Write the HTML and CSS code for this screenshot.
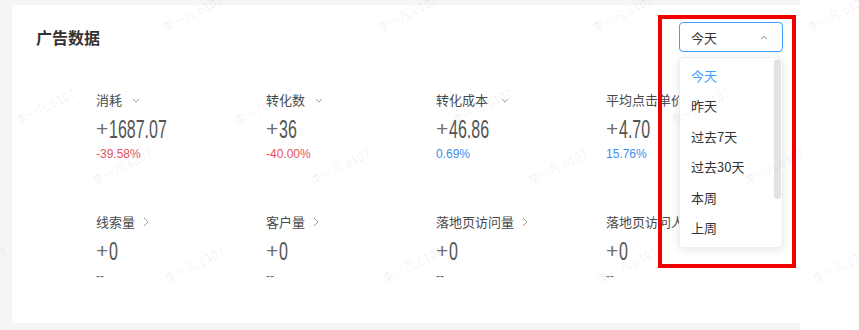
FILE: index.html
```html
<!DOCTYPE html>
<html lang="zh-CN">
<head>
<meta charset="utf-8">
<title>广告数据</title>
<link rel="stylesheet" href="styles.css">
</head>
<body>
<div class="page">
  <div class="card">
    <div class="header">
      <h2 class="title">广告数据</h2>
      <div class="select">
        <span>今天</span>
        <svg class="sel-arrow" width="8" height="5" viewBox="0 0 8 5"><polyline points="1,4.2 4,1.2 7,4.2" fill="none" stroke="#a8abb2" stroke-width="1.1"/></svg>
      </div>
    </div>
    <div class="grid">
      <div class="metric">
        <div class="label">消耗<svg class="chev-d" width="8" height="5" viewBox="0 0 8 5"><polyline points="1,1 4,4 7,1" fill="none" stroke="#a0a0a0" stroke-width="1"/></svg></div>
        <div class="value"><span class="plus">+</span><span class="num">1687.07</span></div>
        <div class="sub red">-39.58%</div>
      </div>
      <div class="metric">
        <div class="label">转化数<svg class="chev-d" width="8" height="5" viewBox="0 0 8 5"><polyline points="1,1 4,4 7,1" fill="none" stroke="#a0a0a0" stroke-width="1"/></svg></div>
        <div class="value"><span class="plus">+</span><span class="num">36</span></div>
        <div class="sub red">-40.00%</div>
      </div>
      <div class="metric">
        <div class="label">转化成本<svg class="chev-d wide" width="8" height="5" viewBox="0 0 8 5"><polyline points="1,1 4,4 7,1" fill="none" stroke="#a0a0a0" stroke-width="1"/></svg></div>
        <div class="value"><span class="plus">+</span><span class="num">46.86</span></div>
        <div class="sub blue">0.69%</div>
      </div>
      <div class="metric">
        <div class="label">平均点击单价</div>
        <div class="value"><span class="plus">+</span><span class="num">4.70</span></div>
        <div class="sub blue">15.76%</div>
      </div>
      <div class="metric">
        <div class="label">线索量<svg class="chev-r" width="6" height="10" viewBox="0 0 6 10"><polyline points="1,1 5,5 1,9" fill="none" stroke="#a0a0a0" stroke-width="1"/></svg></div>
        <div class="value"><span class="plus">+</span><span class="num">0</span></div>
        <div class="sub gray">--</div>
      </div>
      <div class="metric">
        <div class="label">客户量<svg class="chev-r" width="6" height="10" viewBox="0 0 6 10"><polyline points="1,1 5,5 1,9" fill="none" stroke="#a0a0a0" stroke-width="1"/></svg></div>
        <div class="value"><span class="plus">+</span><span class="num">0</span></div>
        <div class="sub gray">--</div>
      </div>
      <div class="metric">
        <div class="label">落地页访问量<svg class="chev-r" width="6" height="10" viewBox="0 0 6 10"><polyline points="1,1 5,5 1,9" fill="none" stroke="#a0a0a0" stroke-width="1"/></svg></div>
        <div class="value"><span class="plus">+</span><span class="num">0</span></div>
        <div class="sub gray">--</div>
      </div>
      <div class="metric">
        <div class="label">落地页访问人数</div>
        <div class="value"><span class="plus">+</span><span class="num">0</span></div>
        <div class="sub gray">--</div>
      </div>
    </div>

    <div class="menu">
      <ul class="menu-list">
        <li class="active">今天</li>
        <li>昨天</li>
        <li>过去7天</li>
        <li>过去30天</li>
        <li>本周</li>
        <li>上周</li>
      </ul>
      <div class="thumb"></div>
    </div>
    <div class="redframe"></div>
  </div>

  <div class="watermarks">
    <span class="wm" style="left:159px;top:3px">李一凡 6107</span>
    <span class="wm" style="left:374px;top:3px">李一凡 6107</span>
    <span class="wm" style="left:589px;top:3px">李一凡 6107</span>
    <span class="wm" style="left:804px;top:3px">李一凡 6107</span>
    <span class="wm" style="left:12px;top:96px">李一凡 6107</span>
    <span class="wm" style="left:231px;top:96px">李一凡 6107</span>
    <span class="wm" style="left:449px;top:96px">李一凡 6107</span>
    <span class="wm" style="left:667px;top:96px">李一凡 6107</span>
    <span class="wm" style="left:89px;top:156px">李一凡 6107</span>
    <span class="wm" style="left:307px;top:156px">李一凡 6107</span>
    <span class="wm" style="left:524px;top:156px">李一凡 6107</span>
    <span class="wm" style="left:741px;top:156px">李一凡 6107</span>
    <span class="wm" style="left:-56px;top:254px">李一凡 6107</span>
    <span class="wm" style="left:161px;top:254px">李一凡 6107</span>
    <span class="wm" style="left:379px;top:254px">李一凡 6107</span>
    <span class="wm" style="left:594px;top:254px">李一凡 6107</span>
    <span class="wm" style="left:809px;top:254px">李一凡 6107</span>
  </div>
</div>
</body>
</html>
```

FILE: styles.css
```css
* { box-sizing: border-box; }
html, body {
  margin: 0;
  padding: 0;
  background: #ffffff;
}
body {
  width: 859px;
  height: 330px;
  overflow: hidden;
  position: relative;
  font-family: "Noto Sans CJK SC", "Noto Sans", sans-serif;
  color: #333;
}
.page {
  width: 800px;
  height: 330px;
  background: #f4f5f7;
  padding: 5px 0 0 12px;
}
.card {
  position: relative;
  height: 318px;
  background: #ffffff;
  padding: 0 17px 0 24px;
}
.header {
  display: flex;
  justify-content: space-between;
  align-items: center;
  padding-top: 17px;
  height: 47px;
}
.title {
  margin: 0;
  font-size: 16px;
  font-weight: 700;
  line-height: 22px;
  color: #333;
}
.select {
  width: 104px;
  height: 30px;
  border: 1px solid #409eff;
  border-radius: 4px;
  display: flex;
  align-items: center;
  justify-content: space-between;
  padding: 0 14px 0 11px;
  font-size: 13px;
  color: #333;
  background: #fff;
}
.sel-arrow { display: block; }
.grid {
  display: grid;
  grid-template-columns: repeat(4, 170px);
  row-gap: 49px;
  padding-left: 60px;
  margin-top: 38px;
}
.metric {
  display: flex;
  flex-direction: column;
}
.label {
  display: flex;
  align-items: center;
  font-size: 13px;
  line-height: 20px;
  color: #4a4a4a;
  white-space: nowrap;
}
.chev-d { margin-left: 10px; }
.chev-d.wide { margin-left: 13px; }
.chev-r { margin-left: 8px; }
.value {
  margin-top: 4px;
  height: 30px;
  line-height: 30px;
  display: flex;
  align-items: center;
  white-space: nowrap;
}
.plus {
  font-family: "Liberation Sans", sans-serif;
  font-size: 21px;
  color: #6e6e6e;
  margin-right: 1px;
}
.num {
  display: inline-block;
  font-family: "Liberation Sans", sans-serif;
  font-size: 25px;
  color: #555;
  transform: scaleX(0.64);
  transform-origin: left center;
}
.sub {
  margin-top: 1px;
  font-family: "Liberation Sans", sans-serif;
  font-size: 12px;
  line-height: 18px;
}
.red { color: #e5545b; }
.blue { color: #3d8ee8; }
.gray { color: #666; }

.menu {
  position: absolute;
  left: 667px;
  top: 52px;
  width: 104px;
  height: 191px;
  background: #fff;
  border: 1px solid #eceef2;
  border-radius: 4px;
  box-shadow: 0 2px 10px rgba(0, 0, 0, 0.10);
  overflow: hidden;
}
.menu-list {
  list-style: none;
  margin: 0;
  padding: 3px 0 0 0;
}
.menu-list li {
  height: 30.4px;
  line-height: 30.4px;
  padding-left: 11px;
  font-size: 13px;
  color: #333;
}
.menu-list li.active { color: #409eff; }
.thumb {
  position: absolute;
  right: 1px;
  top: 1px;
  width: 7px;
  height: 140px;
  border-radius: 4px;
  background: #e2e3e5;
}
.redframe {
  position: absolute;
  left: 646px;
  top: 10px;
  width: 138px;
  height: 253px;
  border: 4px solid #f20000;
}
.watermarks {
  position: absolute;
  left: 0;
  top: 0;
  width: 859px;
  height: 330px;
  pointer-events: none;
  overflow: hidden;
}
.wm {
  position: absolute;
  width: 72px;
  font-size: 12px;
  line-height: 18px;
  white-space: nowrap;
  color: rgba(0, 0, 0, 0.07);
  transform: rotate(-27deg);
  transform-origin: center center;
}
```
